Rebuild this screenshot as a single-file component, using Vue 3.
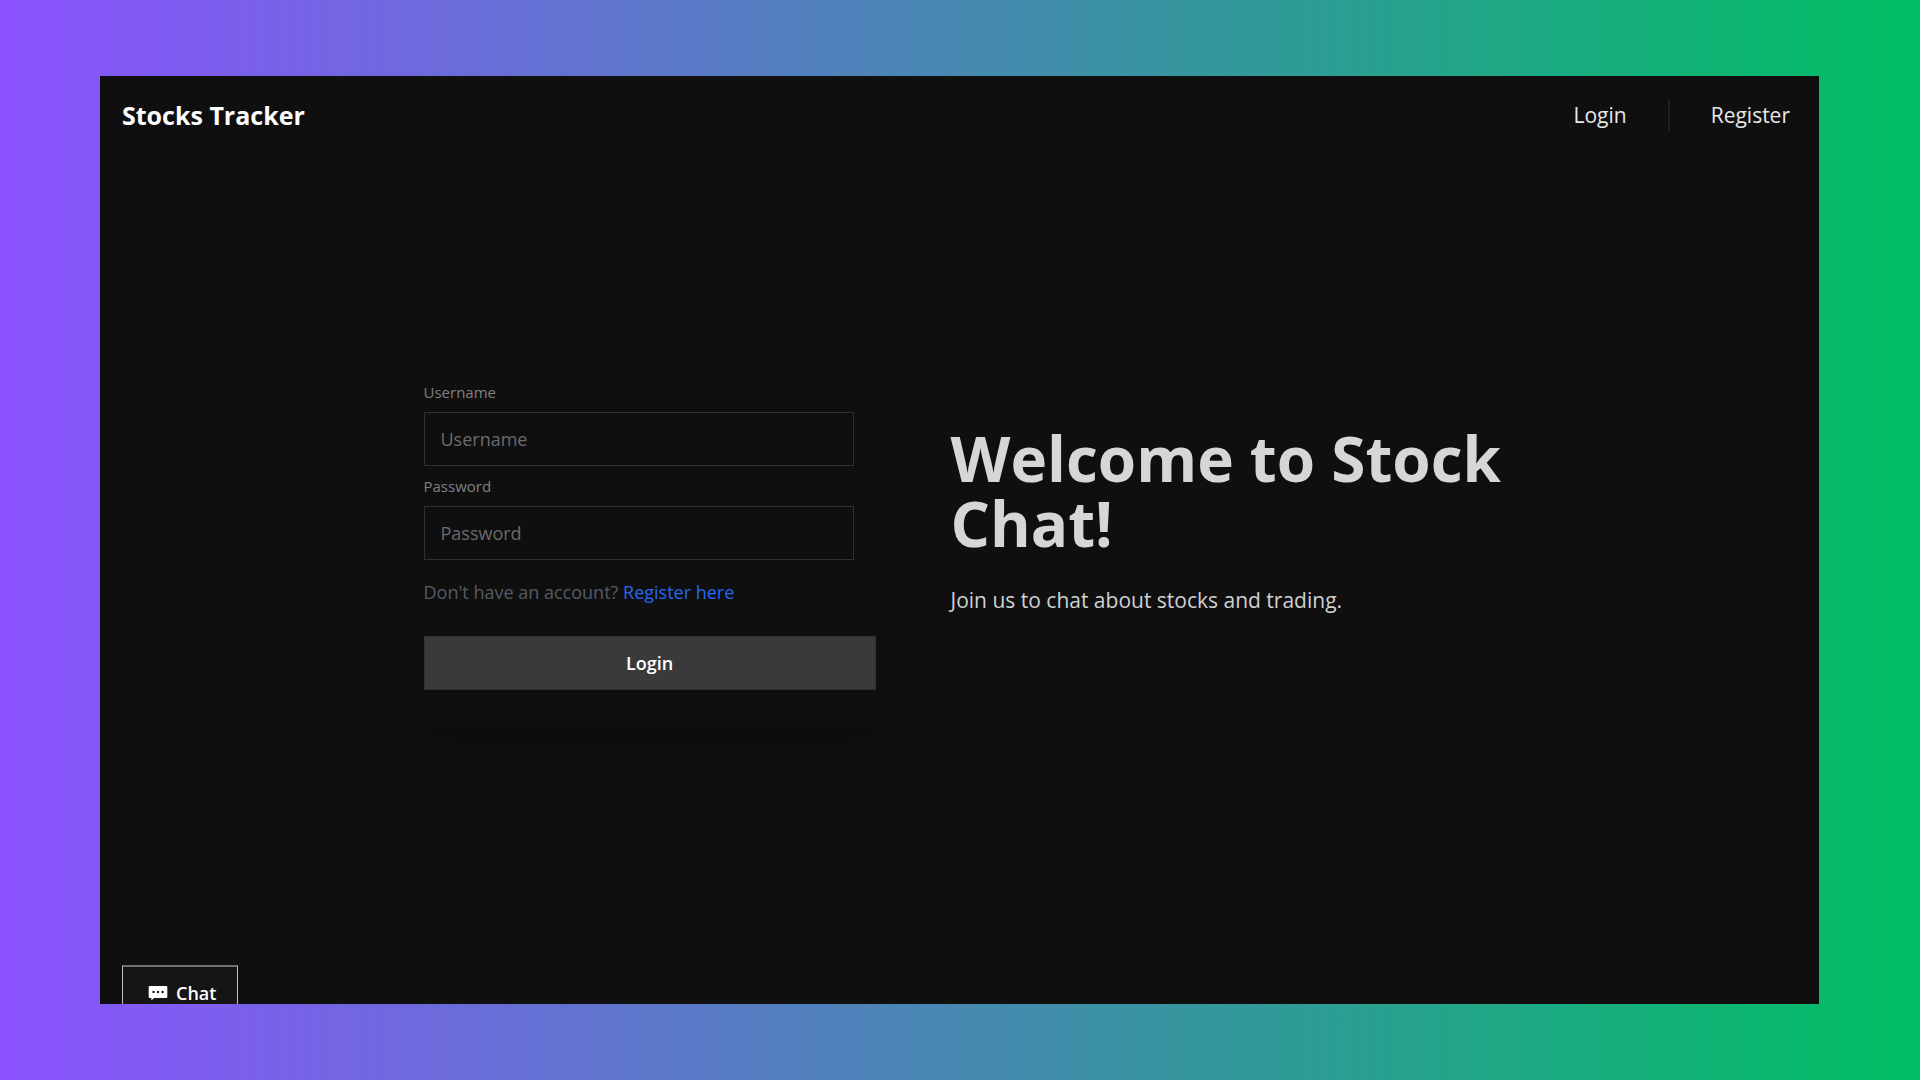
<script setup>
import { ref } from 'vue'

const username = ref('')
const password = ref('')
</script>

<template>
  <div class="backdrop">
    <div class="window">
      <header class="topbar">
        <a class="brand" href="#">Stocks Tracker</a>
        <nav class="links">
          <a href="#login">Login</a>
          <span class="divider"></span>
          <a href="#register">Register</a>
        </nav>
      </header>

      <main class="hero">
        <form class="card" @submit.prevent>
          <label for="username">Username</label>
          <input id="username" v-model="username" type="text" placeholder="Username" />
          <label for="password">Password</label>
          <input id="password" v-model="password" type="password" placeholder="Password" />
          <p class="hint">Don't have an account? <a href="#register">Register here</a></p>
          <button class="submit" type="submit">Login</button>
        </form>

        <section class="welcome">
          <h1>Welcome to Stock Chat!</h1>
          <p>Join us to chat about stocks and trading.</p>
        </section>
      </main>

      <button class="chat" type="button">
        <svg width="20" height="16" viewBox="0 0 20 16" aria-hidden="true">
          <path
            fill="#fff"
            d="M1.5 1h17a.8.8 0 0 1 .8.8v10.4a.8.8 0 0 1-.8.8H6l-2.6 2.4V13H1.500a.8.8 0 0 1-.8-.8V1.800a.8.8 0 0 1 .8-.8z"
          />
          <g fill="#151515">
            <circle cx="5.5" cy="7" r="1.200" />
            <circle cx="10" cy="7" r="1.200" />
            <circle cx="14.500" cy="7" r="1.200" />
          </g>
        </svg>
        <span>Chat</span>
      </button>
    </div>
  </div>
</template>

<style>
body {
  margin: 0;
}
</style>

<style scoped>
.backdrop {
  box-sizing: border-box;
  display: flex;
  min-height: 100vh;
  padding: 76px 101px 76px 100px;
  background: linear-gradient(90deg, #8c52ff, #00bf63);
  font-family: "Open Sans", "Noto Sans", sans-serif;
}

.window {
  position: relative;
  display: flex;
  flex: 1;
  flex-direction: column;
  overflow: hidden;
  background: #0f0f0f;
}

.topbar {
  display: flex;
  align-items: center;
  justify-content: space-between;
  height: 78px;
  padding: 0 29px 0 22px;
  box-shadow: 0 4px 12px rgba(0, 0, 0, 0.2);
}

.brand {
  color: #fff;
  font-size: 25px;
  font-weight: 700;
  text-decoration: none;
}

.links {
  display: flex;
  align-items: center;
  gap: 41px;
}

.links a {
  color: #e8e8e8;
  font-size: 21px;
  text-decoration: none;
}

.divider {
  width: 2px;
  height: 32px;
  background: #1f1f1f;
}

.hero {
  display: flex;
  flex: 1;
  align-items: center;
  justify-content: center;
  gap: 44px;
  padding-bottom: 82px;
}

.card {
  display: flex;
  flex-direction: column;
  box-sizing: border-box;
  width: 513px;
  padding: 30px 31px 36px 30px;
  background: #0f0f0f;
  box-shadow: 0 28px 50px -24px rgba(0, 0, 0, 0.25);
}

.card label {
  margin-bottom: 8px;
  color: #808080;
  font-size: 15px;
  line-height: 24px;
}

.card input {
  box-sizing: border-box;
  height: 54px;
  margin: 0 22px 8px 0;
  padding: 0 16px;
  border: 1px solid #303030;
  border-radius: 0;
  outline: none;
  background: #0f0f0f;
  color: #d6d6d6;
  font: inherit;
  font-size: 18px;
}

.card input::placeholder {
  color: #6b6b6b;
}

.hint {
  margin: 12px 0 32px;
  color: #555b66;
  font-size: 18px;
  line-height: 24px;
}

.hint a {
  color: #2468f2;
  text-decoration: none;
}

.submit {
  height: 54px;
  border: 1px solid #303030;
  background: #3a3a3a;
  color: #fff;
  font: inherit;
  font-size: 18px;
  font-weight: 600;
}

.welcome {
  width: 575px;
  margin-bottom: 36px;
}

.welcome h1 {
  margin: 0 0 30px;
  color: #d6d6d6;
  font-size: 62px;
  font-weight: 700;
  line-height: 65px;
}

.welcome p {
  margin: 0;
  color: #d1d1d1;
  font-size: 21px;
  line-height: 28px;
}

.chat {
  position: absolute;
  bottom: -15px;
  left: 22px;
  display: flex;
  align-items: center;
  gap: 8px;
  height: 54px;
  padding: 0 21px 0 25px;
  border: 1px solid #bdbdbd;
  border-top: 2px solid #707070;
  background: #151515;
  color: #fff;
  font: inherit;
  font-size: 18px;
  font-weight: 600;
}
</style>
